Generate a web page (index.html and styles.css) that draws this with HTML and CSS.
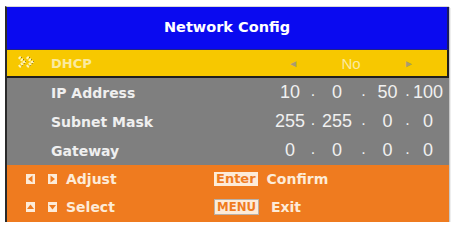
FILE: index.html
```html
<!DOCTYPE html>
<html lang="en">
<head>
  <meta charset="UTF-8">
  <title>Network Config</title>
  <link rel="stylesheet" href="styles.css">
</head>
<body>
  <div class="osd">
    <div class="osd-title">Network Config</div>

    <div class="osd-row selected">
      <svg class="pointer" width="20" height="14" viewBox="0 0 20 14">
        <polyline points="1,2 6,7 1,12" fill="none" stroke="#fff3b8" stroke-width="3" stroke-dasharray="2 1"/>
        <polyline points="9,2 14,7 9,12" fill="none" stroke="#fff3b8" stroke-width="3" stroke-dasharray="2 1"/>
        <polyline points="3,2 8,7 3,12" fill="none" stroke="#6b5a10" stroke-width="1" stroke-dasharray="1 2"/>
        <polyline points="11,2 16,7 11,12" fill="none" stroke="#6b5a10" stroke-width="1" stroke-dasharray="1 2"/>
      </svg>
      <span class="label">DHCP</span>
      <div class="choice">
        <span class="arrow">&#9668;</span>
        <span class="choice-value">No</span>
        <span class="arrow">&#9658;</span>
      </div>
    </div>

    <div class="osd-row">
      <span class="label">IP Address</span>
      <div class="ip">
        <span>10</span><span class="dot">.</span><span>0</span><span class="dot">.</span><span>50</span><span class="dot">.</span><span>100</span>
      </div>
    </div>
    <div class="osd-row">
      <span class="label">Subnet Mask</span>
      <div class="ip">
        <span>255</span><span class="dot">.</span><span>255</span><span class="dot">.</span><span>0</span><span class="dot">.</span><span>0</span>
      </div>
    </div>
    <div class="osd-row">
      <span class="label">Gateway</span>
      <div class="ip">
        <span>0</span><span class="dot">.</span><span>0</span><span class="dot">.</span><span>0</span><span class="dot">.</span><span>0</span>
      </div>
    </div>

    <div class="osd-help">
      <div class="help-item">
        <span class="keys">
          <svg class="key-box" viewBox="0 0 9 10"><rect width="9" height="10" fill="#fdebd8"/><polygon points="6.5,1.5 2,5 6.5,8.5" fill="#ef7b1f"/></svg>
          <svg class="key-box" viewBox="0 0 9 10"><rect width="9" height="10" fill="#fdebd8"/><polygon points="2.5,1.5 7,5 2.5,8.5" fill="#ef7b1f"/></svg>
        </span>
        <span>Adjust</span>
      </div>
      <div class="help-item">
        <span class="tag">Enter</span>
        <span>Confirm</span>
      </div>
      <div class="help-item">
        <span class="keys">
          <svg class="key-box" viewBox="0 0 9 10"><rect width="9" height="10" fill="#fdebd8"/><polygon points="1,7 4.5,2.5 8,7" fill="#ef7b1f"/></svg>
          <svg class="key-box" viewBox="0 0 9 10"><rect width="9" height="10" fill="#fdebd8"/><polygon points="1,3 4.5,7.5 8,3" fill="#ef7b1f"/></svg>
        </span>
        <span>Select</span>
      </div>
      <div class="help-item">
        <span class="tag menu">MENU</span>
        <span>Exit</span>
      </div>
    </div>
  </div>
</body>
</html>
```

FILE: styles.css
```css
body {
  margin: 0;
  background-color: #ffffff;
  font-family: "DejaVu Sans", Verdana, sans-serif;
}
.osd {
  margin: 6px 0 0 5px;
  width: 442px;
  border-left: 2px solid #2a2a2a;
  border-top: 1px solid #d8d8d8;
  box-shadow: 1px 1px 0 #c8c8c8, 2px 2px 0 #eeeeee;
}
.osd-title {
  height: 43px;
  line-height: 41px;
  background-color: #0a0af0;
  color: #ffffff;
  text-align: center;
  font-weight: bold;
  font-size: 14.5px;
  border-right: 2px solid #1a1a60;
  border-bottom: 1px solid #20208a;
  box-sizing: border-box;
}
.osd-row {
  display: flex;
  align-items: center;
  height: 29px;
  padding-left: 44px;
  background-color: #7f7f7f;
  box-sizing: border-box;
}
.osd-row .label {
  font-weight: bold;
  font-size: 14px;
  color: #efefef;
}
.osd-row.selected {
  position: relative;
  height: 28px;
  background-color: #f7c800;
  border-right: 2px solid #1e1e1e;
  border-bottom: 2px solid #1e1e1e;
}
.osd-row.selected .label {
  color: #faeaa0;
  font-size: 13px;
}
.pointer {
  position: absolute;
  left: 11px;
  top: 5px;
}
.choice {
  display: flex;
  align-items: center;
  margin-left: auto;
  margin-right: 33px;
  color: #faeaa0;
  font-family: "Liberation Sans", Arial, sans-serif;
  font-size: 15px;
}
.choice .arrow {
  font-size: 10px;
  color: #a89c70;
}
.choice-value {
  width: 106px;
  text-align: center;
}
.ip {
  display: grid;
  grid-template-columns: 34px 12px 36px 17px 31px 9px 32px;
  justify-items: center;
  margin-left: auto;
  margin-right: 5px;
  font-family: "Liberation Sans", Arial, sans-serif;
  font-size: 18px;
  color: #f0f0f0;
}
.ip .dot {
  font-size: 16px;
}
.osd-help {
  display: grid;
  grid-template-columns: 188px 1fr;
  grid-auto-rows: 28px;
  align-items: center;
  padding: 0 0 1px 19px;
  background-color: #ef7b1f;
  color: #fdebd8;
  font-weight: bold;
  font-size: 14px;
}
.help-item {
  display: flex;
  align-items: center;
  gap: 9px;
}
.keys {
  display: flex;
  gap: 13px;
}
.key-box {
  display: block;
  width: 9px;
  height: 10px;
}
.tag {
  padding: 0 2px;
  background-color: #fdebd8;
  color: #ef7b1f;
  font-size: 13px;
  line-height: 14px;
}
.tag.menu {
  border: 1px solid #b8b0a8;
  font-family: "DejaVu Sans Condensed", "DejaVu Sans", sans-serif;
  margin-right: 3px;
}
```
